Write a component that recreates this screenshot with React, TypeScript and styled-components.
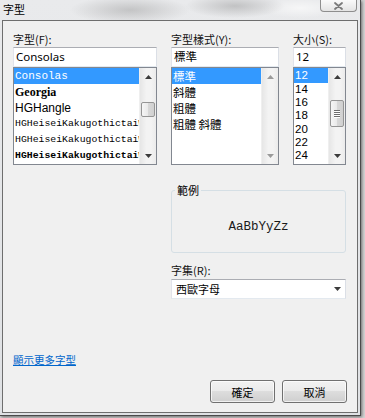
import React from "react";
import styled, { createGlobalStyle } from "styled-components";

const GlobalStyle = createGlobalStyle`
  html, body {
    margin: 0;
    padding: 0;
    background: #d4d4d4;
  }
  body {
    width: 365px;
    height: 418px;
    overflow: hidden;
    font-family: "Noto Sans", "Noto Sans CJK TC", sans-serif;
    color: #000;
  }
`;

const CJK = `"Noto Sans CJK TC", "Noto Sans", sans-serif`;
const MONO = `"Liberation Mono", "DejaVu Sans Mono", monospace`;

const Frame = styled.div`
  width: 361px;
  height: 416px;
  box-sizing: border-box;
  display: flex;
  flex-direction: column;
  border-right: 1px solid #4a4a4a;
  border-bottom: 1px solid #4a4a4a;
  box-shadow: 1px 1px 3px rgba(0, 0, 0, 0.5);
  background:
    radial-gradient(ellipse 60px 14px at 130px 10px, rgba(150, 150, 150, 0.45), transparent),
    radial-gradient(ellipse 50px 12px at 235px 6px, rgba(120, 120, 120, 0.35), transparent),
    radial-gradient(ellipse 40px 10px at 300px 8px, rgba(255, 255, 255, 0.6), transparent),
    linear-gradient(#e9eaec, #dfe1e4);
`;

const TitleBar = styled.div`
  height: 20px;
  display: flex;
  justify-content: space-between;
  align-items: flex-start;
`;

const TitleText = styled.span`
  padding: 3px 0 0 3px;
  font-family: ${CJK};
  font-size: 11px;
  line-height: 13px;
`;

const CloseButton = styled.div`
  width: 37px;
  height: 12px;
  margin-right: 3px;
  box-sizing: border-box;
  border: 1px solid #8e8e8e;
  border-top: none;
  border-radius: 0 0 4px 4px;
  background: linear-gradient(#fafafa, #e4e4e4);
  display: flex;
  align-items: center;
  justify-content: center;
`;

const Client = styled.div`
  flex: 1;
  margin: 0 2px 2px 2px;
  border: 1px solid #6e6e6e;
  background: #f0f0f0;
  padding: 11px 10px 9px 10px;
  display: flex;
  flex-direction: column;
`;

const MainGrid = styled.div`
  display: grid;
  grid-template-columns: 144px 108px 53px;
  column-gap: 14px;
`;

const Column = styled.div`
  display: flex;
  flex-direction: column;
`;

const FieldLabel = styled.div<{ $gap?: number }>`
  height: 15px;
  line-height: 15px;
  font-family: ${CJK};
  font-size: 11px;
  margin-top: ${(p) => p.$gap ?? 0}px;
  color: #111;
`;

const TextBox = styled.div`
  height: 20px;
  box-sizing: border-box;
  border: 1px solid;
  border-color: #abadb3 #dbdfe6 #e3e9ef #e2e3ea;
  background: #fff;
  padding: 0 2px;
  font-size: 11.5px;
  line-height: 18px;
  font-family: "Noto Sans", "Noto Sans CJK TC", sans-serif;
`;

const ListBox = styled.div`
  height: 98px;
  box-sizing: border-box;
  border: 1px solid #828790;
  background: #fff;
  display: flex;
  overflow: hidden;
`;

const Rows = styled.div`
  flex: 1;
  min-width: 0;
`;

const Row = styled.div<{
  $selected?: boolean;
  $font?: string;
  $size?: number;
  $weight?: number;
  $h?: number;
}>`
  height: ${(p) => p.$h ?? 16}px;
  line-height: ${(p) => p.$h ?? 16}px;
  padding-left: 1px;
  white-space: nowrap;
  overflow: hidden;
  font-family: ${(p) => p.$font ?? CJK};
  font-size: ${(p) => p.$size ?? 11.5}px;
  font-weight: ${(p) => p.$weight ?? 400};
  background: ${(p) => (p.$selected ? "#3399ff" : "transparent")};
  color: ${(p) => (p.$selected ? "#fff" : "#000")};
`;

const ScrollBar = styled.div`
  width: 16px;
  flex: none;
  display: flex;
  flex-direction: column;
  background: linear-gradient(to right, #e6e6e6, #f3f3f3 40%, #f3f3f3 70%, #ebebeb);
  border-left: 1px solid #efefef;
`;

const ArrowCell = styled.div`
  height: 17px;
  flex: none;
  display: flex;
  align-items: center;
  justify-content: center;
`;

const Track = styled.div`
  flex: 1;
`;

const Thumb = styled.div<{ $top: number; $height: number }>`
  margin: ${(p) => p.$top}px 1px 0 1px;
  height: ${(p) => p.$height}px;
  box-sizing: border-box;
  border: 1px solid #959595;
  border-radius: 2px;
  background: linear-gradient(to right, #f6f6f6, #e9e9e9 50%, #d8d8d8 51%, #d0d0d0);
  display: flex;
  flex-direction: column;
  align-items: center;
  justify-content: center;
  gap: 1px;
`;

const Grip = styled.div`
  width: 6px;
  height: 1px;
  background: #6e6e6e;
  box-shadow: 0 1px 0 #fff;
`;

const LowerPanel = styled.div`
  grid-column: 2 / 4;
  display: flex;
  flex-direction: column;
  margin-top: 25px;
`;

const GroupBox = styled.div`
  position: relative;
  height: 63px;
  box-sizing: border-box;
  border: 1px solid #d5dfe5;
  border-radius: 3px;
  padding-top: 10px;
  display: flex;
  align-items: center;
  justify-content: center;
`;

const GroupLegend = styled.span`
  position: absolute;
  top: -8px;
  left: 3px;
  padding: 0 2px;
  background: #f0f0f0;
  font-family: ${CJK};
  font-size: 11px;
  line-height: 14px;
`;

const SampleText = styled.span`
  font-family: ${MONO};
  font-size: 12.5px;
  color: #1a1a1a;
`;

const Dropdown = styled.div`
  height: 20px;
  margin-top: 1px;
  box-sizing: border-box;
  border: 1px solid;
  border-color: #abadb3 #dbdfe6 #e3e9ef #e2e3ea;
  background: #fff;
  display: flex;
  align-items: center;
  justify-content: space-between;
  padding: 0 4px;
  font-family: ${CJK};
  font-size: 11px;
`;

const MoreLink = styled.a`
  margin-top: 53px;
  align-self: flex-start;
  font-family: ${CJK};
  font-size: 10.5px;
  line-height: 15px;
  color: #0066cc;
  text-decoration: underline;
  cursor: pointer;
`;

const ButtonRow = styled.div`
  margin-top: auto;
  display: flex;
  justify-content: flex-end;
  gap: 7px;
`;

const DialogButton = styled.button`
  width: 65px;
  height: 23px;
  box-sizing: border-box;
  border: 1px solid #707070;
  border-radius: 3px;
  background: linear-gradient(#f2f2f2 0%, #ebebeb 45%, #dddddd 50%, #cfcfcf 100%);
  box-shadow: inset 0 0 0 1px rgba(255, 255, 255, 0.7);
  font-family: ${CJK};
  font-size: 11px;
  color: #000;
  padding: 0;
`;

const Arrow = ({ down, muted }: { down?: boolean; muted?: boolean }) => (
  <svg width="7" height="4" viewBox="0 0 7 4">
    <polygon
      points={down ? "0,0 7,0 3.5,4" : "3.5,0 7,4 0,4"}
      fill={muted ? "#9a9a9a" : "#3c3c3c"}
    />
  </svg>
);

const Scroller = ({
  thumb,
  grip,
  muted,
}: {
  thumb?: [number, number];
  grip?: boolean;
  muted?: boolean;
}) => (
  <ScrollBar>
    <ArrowCell>
      <Arrow muted={muted} />
    </ArrowCell>
    <Track>
      {thumb && (
        <Thumb $top={thumb[0]} $height={thumb[1]}>
          {grip && (
            <>
              <Grip />
              <Grip />
              <Grip />
              <Grip />
            </>
          )}
        </Thumb>
      )}
    </Track>
    <ArrowCell>
      <Arrow down muted={muted} />
    </ArrowCell>
  </ScrollBar>
);

const App = () => {
  const sizes = ["12", "14", "16", "18", "20", "22", "24"];
  return (
    <>
      <GlobalStyle />
      <Frame>
        <TitleBar>
          <TitleText>字型</TitleText>
          <CloseButton>
            <svg width="9" height="8" viewBox="0 0 9 8">
              <path
                d="M1 1 L8 7 M8 1 L1 7"
                stroke="#7a7a7a"
                strokeWidth="1.8"
                strokeLinecap="round"
              />
            </svg>
          </CloseButton>
        </TitleBar>
        <Client>
          <MainGrid>
            <Column>
              <FieldLabel>字型(F):</FieldLabel>
              <TextBox>Consolas</TextBox>
              <ListBox>
                <Rows>
                  <Row $selected $font={MONO} $size={11}>
                    Consolas
                  </Row>
                  <Row $font={`"Liberation Serif", serif`} $size={12} $weight={700}>
                    Georgia
                  </Row>
                  <Row $font={`"Liberation Sans", sans-serif`} $size={12}>
                    HGHangle
                  </Row>
                  <Row $font={MONO} $size={9.8}>
                    HGHeiseiKakugothictaiW3
                  </Row>
                  <Row $font={MONO} $size={9.8}>
                    HGHeiseiKakugothictaiW5
                  </Row>
                  <Row $font={MONO} $size={9.8} $weight={700}>
                    HGHeiseiKakugothictaiW9
                  </Row>
                </Rows>
                <Scroller thumb={[17, 15]} />
              </ListBox>
            </Column>
            <Column>
              <FieldLabel>字型樣式(Y):</FieldLabel>
              <TextBox>標準</TextBox>
              <ListBox>
                <Rows>
                  <Row $selected>標準</Row>
                  <Row>斜體</Row>
                  <Row>粗體</Row>
                  <Row>粗體 斜體</Row>
                </Rows>
                <Scroller muted />
              </ListBox>
            </Column>
            <Column>
              <FieldLabel>大小(S):</FieldLabel>
              <TextBox>12</TextBox>
              <ListBox>
                <Rows>
                  {sizes.map((s, i) => (
                    <Row
                      key={s}
                      $selected={i === 0}
                      $h={i === 0 ? 15 : 13.2}
                      $font={`"Liberation Sans", sans-serif`}
                      $size={11.5}
                    >
                      {s}
                    </Row>
                  ))}
                </Rows>
                <Scroller thumb={[15, 27]} grip />
              </ListBox>
            </Column>
            <LowerPanel>
              <GroupBox>
                <GroupLegend>範例</GroupLegend>
                <SampleText>AaBbYyZz</SampleText>
              </GroupBox>
              <FieldLabel $gap={10}>字集(R):</FieldLabel>
              <Dropdown>
                <span>西歐字母</span>
                <Arrow down />
              </Dropdown>
            </LowerPanel>
          </MainGrid>
          <MoreLink>顯示更多字型</MoreLink>
          <ButtonRow>
            <DialogButton>確定</DialogButton>
            <DialogButton>取消</DialogButton>
          </ButtonRow>
        </Client>
      </Frame>
    </>
  );
};

export default App;
